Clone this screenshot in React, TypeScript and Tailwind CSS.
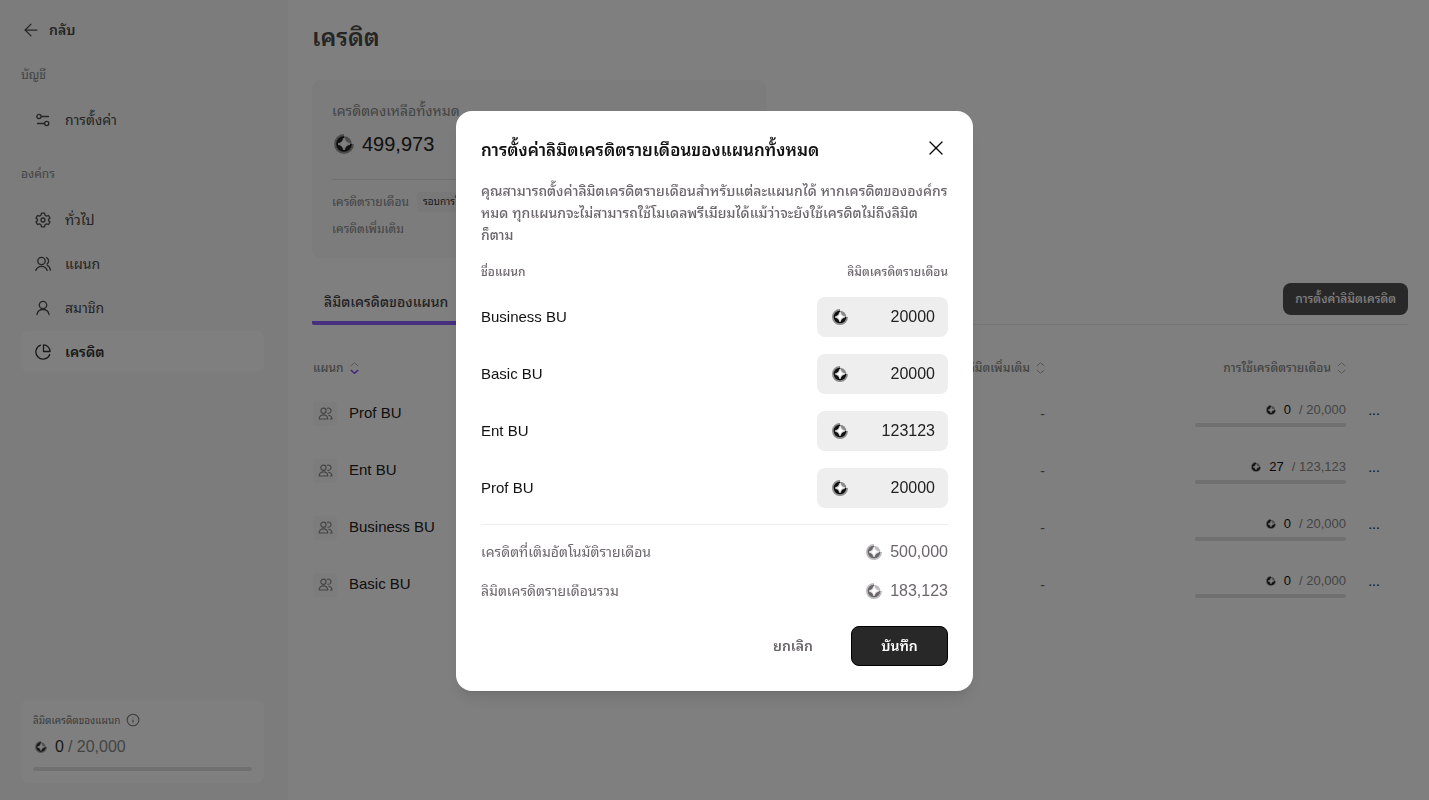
import { useState } from "react";
import { ArrowLeft, Info, X } from "lucide-react";

const departments = [
  { name: "Prof BU", used: "0", limit: "20,000" },
  { name: "Ent BU", used: "27", limit: "123,123" },
  { name: "Business BU", used: "0", limit: "20,000" },
  { name: "Basic BU", used: "0", limit: "20,000" },
];

const CoinIcon = ({ className = "" }) => (
  <svg viewBox="0 0 20 20" className={className} aria-hidden="true">
    <path d="M10 0A10 10 0 1 0 20 10H10Z" fill="currentColor" opacity="0.45" />
    <circle cx="10" cy="10" r="7.8" fill="currentColor" opacity="0.45" />
    <path d="M10 2.2A7.8 7.8 0 1 0 17.8 10H10Z" fill="currentColor" />
    <path d="M10 4Q11 9 16 10Q11 11 10 16Q9 11 4 10Q9 9 10 4Z" fill="white" stroke="white" />
  </svg>
);

const SlidersIcon = () => (
  <svg viewBox="0 0 16 16" className="size-4" fill="none" stroke="currentColor" strokeWidth="1.3" strokeLinecap="round">
    <circle cx="4" cy="4.5" r="2.1" />
    <path d="M6.5 4.5H13.5M2.5 11.5h7" />
    <circle cx="11.7" cy="11.5" r="2.1" />
  </svg>
);

const GearIcon = () => (
  <svg viewBox="0 0 16 16" className="size-4" fill="none" stroke="currentColor" strokeWidth="1.3" strokeLinejoin="round">
    <path d="M6.5 1.2h3l.5 2 1.5.9 2-.6 1.5 2.6-1.5 1.4v1l1.5 1.4-1.5 2.6-2-.6-1.5.9-.5 2h-3l-.5-2-1.5-.9-2 .6L1 9.9l1.5-1.4v-1L1 6.1l1.5-2.6 2 .6 1.5-.9z" />
    <circle cx="8" cy="8" r="2" />
  </svg>
);

const UserIcon = () => (
  <svg viewBox="0 0 16 16" className="size-4" fill="none" stroke="currentColor" strokeWidth="1.3" strokeLinecap="round">
    <circle cx="8" cy="5" r="3.7" />
    <path d="M2 14.5a6.1 6.1 0 0 1 12 0" />
  </svg>
);

const UsersIcon = () => (
  <svg viewBox="0 0 16 16" className="size-4" fill="none" stroke="currentColor" strokeWidth="1.3" strokeLinecap="round">
    <circle cx="6.5" cy="5" r="3.7" />
    <path d="M.8 14.5a6 6 0 0 1 11.4 0M11.5 1.7a3.7 3.7 0 0 1 .6 6.3M12.2 9.2a6 6 0 0 1 3.1 5" />
  </svg>
);

const GroupIcon = () => (
  <svg viewBox="0 0 16 16" className="size-[15px]" fill="none" stroke="currentColor" strokeWidth="1.2" strokeLinecap="round" strokeLinejoin="round">
    <circle cx="5.8" cy="5" r="2.8" />
    <path d="M1.2 13.8a4.6 4.4 0 0 1 9.2 0ZM10 2.4a2.8 2.8 0 1 1 .5 5.3M11.5 9.8a4.3 4.3 0 0 1 3.5 4h-2" />
  </svg>
);

const PieIcon = () => (
  <svg viewBox="0 0 16 16" className="size-4" fill="none" stroke="currentColor" strokeWidth="1.3" strokeLinejoin="round">
    <path d="M5.5 1.2A7.2 7.2 0 1 0 14.8 10.5" strokeLinecap="round" />
    <path d="M8.5 .9A6.7 6.7 0 0 1 15.1 7.5H8.5Z" />
  </svg>
);

const SortIcon = ({ active = false }) => (
  <svg viewBox="0 0 9 12" className="h-3 w-[9px]" fill="none">
    <path d="M.8 4 4.5.7 8.2 4" stroke="#aaa" />
    <path d="M.8 8l3.7 3.3L8.2 8" stroke={active ? "#7c4dff" : "#aaa"} strokeWidth={active ? 1.5 : 1} />
  </svg>
);

const NavItem = ({ icon, label, active = false }) => (
  <a
    href="#"
    className={`flex h-[41px] items-center gap-3.5 rounded-lg px-3.5 text-sm ${
      active ? "bg-white font-semibold text-[#333]" : "text-[#4a4a4a]"
    }`}
  >
    {icon}
    {label}
  </a>
);

const Sidebar = () => (
  <aside className="flex w-72 shrink-0 flex-col bg-[#f8f8f8] pb-[17px] pl-[21px] pr-6 pt-4">
    <a href="#" className="flex h-7 items-center gap-2 text-sm font-semibold text-[#4a4a4a]">
      <ArrowLeft className="size-5" strokeWidth={1.5} />
      กลับ
    </a>
    <h2 className="mt-[21px] text-xs leading-5 text-[#888]">บัญชี</h2>
    <nav className="mt-3.5">
      <NavItem icon={<SlidersIcon />} label="การตั้งค่า" />
    </nav>
    <h2 className="mt-6 text-xs leading-5 text-[#888]">องค์กร</h2>
    <nav className="mt-[15px] flex flex-col gap-[3px]">
      <NavItem icon={<GearIcon />} label="ทั่วไป" />
      <NavItem icon={<UsersIcon />} label="แผนก" />
      <NavItem icon={<UserIcon />} label="สมาชิก" />
      <NavItem icon={<PieIcon />} label="เครดิต" active />
    </nav>
    <div className="mt-auto rounded-lg bg-white px-3 pb-3 pt-2.5">
      <div className="flex h-5 items-center gap-1.5 text-[10px] text-[#777]">
        ลิมิตเครดิตของแผนก
        <Info className="size-3.5" strokeWidth={1.8} />
      </div>
      <div className="mt-[5px] flex h-6 items-center gap-1 text-base text-[#888]">
        <CoinIcon className="ml-0.5 mr-1 size-3 text-[#333]" />
        <span className="text-[#333]">0</span> / 20,000
      </div>
      <div className="mt-2 h-1 rounded-full bg-[#e0e0e0]" />
    </div>
  </aside>
);

const CreditTable = () => (
  <table className="mt-[25px] w-full text-[#222]">
    <thead>
      <tr className="h-[35px] text-xs text-[#888]">
        <th className="pl-px text-left font-medium">
          <span className="inline-flex items-center gap-1.5">
            แผนก <SortIcon active />
          </span>
        </th>
        <th className="text-right font-medium">
          <span className="inline-flex items-center gap-1.5">
            ลิมิตเพิ่มเติม <SortIcon />
          </span>
        </th>
        <th className="w-[301px] text-right font-medium">
          <span className="inline-flex items-center gap-1.5">
            การใช้เครดิตรายเดือน <SortIcon />
          </span>
        </th>
        <th className="w-[62px]" />
      </tr>
    </thead>
    <tbody>
      {departments.map((d) => (
        <tr key={d.name} className="h-[57px]">
          <td className="pl-px">
            <div className="flex items-center gap-3 text-[15px]">
              <span className="flex size-6 items-center justify-center rounded bg-[#f8f8f8] text-[#888]">
                <GroupIcon />
              </span>
              {d.name}
            </div>
          </td>
          <td className="text-right text-sm text-[#666]">-</td>
          <td>
            <div className="ml-auto w-[151px]">
              <div className="flex h-5 items-center justify-end gap-2 text-[13px] text-[#888]">
                <CoinIcon className="size-2.5 text-[#222]" />
                <span className="text-[#111]">{d.used}</span> / {d.limit}
              </div>
              <div className="mt-[3px] h-1 rounded-full bg-[#e0e0e0]" />
            </div>
          </td>
          <td>
            <button className="ml-5 block w-4 pb-2 text-center text-sm font-medium">...</button>
          </td>
        </tr>
      ))}
    </tbody>
  </table>
);

const LimitModal = () => {
  const [limits, setLimits] = useState([
    { name: "Business BU", value: "20000" },
    { name: "Basic BU", value: "20000" },
    { name: "Ent BU", value: "123123" },
    { name: "Prof BU", value: "20000" },
  ]);

  const change = (index: number, value: string) =>
    setLimits(limits.map((l, i) => (i === index ? { ...l, value } : l)));

  return (
    <div className="fixed inset-0 flex items-center justify-center bg-black/50 pt-0.5">
      <div role="dialog" aria-modal="true" className="w-full max-w-[517px] rounded-2xl bg-white p-[25px] shadow-lg">
        <div className="flex h-7 items-start justify-between">
          <h2 className="text-[17px] font-semibold leading-[30px] text-[#111]">การตั้งค่าลิมิตเครดิตรายเดือนของแผนกทั้งหมด</h2>
          <button aria-label="ปิด">
            <X className="size-6" strokeWidth={1.3} />
          </button>
        </div>
        <p className="mt-4 text-sm font-medium leading-[22px] text-[#6b666b]">
          คุณสามารถตั้งค่าลิมิตเครดิตรายเดือนสำหรับแต่ละแผนกได้ หากเครดิตขององค์กร
          <br />
          หมด ทุกแผนกจะไม่สามารถใช้โมเดลพรีเมียมได้แม้ว่าจะยังใช้เครดิตไม่ถึงลิมิต
          <br />
          ก็ตาม
        </p>
        <div className="mt-4 flex justify-between text-xs font-medium leading-5 text-[#6b666b]">
          <span>ชื่อแผนก</span>
          <span>ลิมิตเครดิตรายเดือน</span>
        </div>
        <div className="mt-[15px] flex flex-col gap-[17px]">
          {limits.map((l, i) => (
            <label key={l.name} className="flex h-10 items-center justify-between text-[15px] text-[#111]">
              {l.name}
              <span className="flex h-10 w-[131px] items-center rounded-lg bg-[#eee] px-[13px]">
                <CoinIcon className="ml-0.5 size-4 shrink-0" />
                <input
                  value={l.value}
                  onChange={(e) => change(i, e.target.value)}
                  className="w-full min-w-0 bg-transparent text-right text-base text-[#222] outline-none"
                />
              </span>
            </label>
          ))}
        </div>
        <div className="mt-4 flex flex-col gap-[15px] border-t border-[#eee] pt-[15px] text-sm text-[#6b666b]">
          <div className="flex h-6 items-center justify-between">
            เครดิตที่เติมอัตโนมัติรายเดือน
            <span className="flex items-center gap-2 text-base">
              <CoinIcon className="size-4" /> 500,000
            </span>
          </div>
          <div className="flex h-6 items-center justify-between">
            ลิมิตเครดิตรายเดือนรวม
            <span className="flex items-center gap-2 text-base">
              <CoinIcon className="size-4" /> 183,123
            </span>
          </div>
        </div>
        <div className="mt-[23px] flex justify-end gap-2.5 text-sm font-semibold">
          <button className="h-10 px-7 text-[#6b666b]">ยกเลิก</button>
          <button className="h-10 w-[97px] rounded-lg border border-black bg-[#282828] text-white">บันทึก</button>
        </div>
      </div>
    </div>
  );
};

export default function App() {
  return (
    <div className="flex min-h-screen bg-white font-['Liberation_Sans','Noto_Sans_Thai_Looped','Noto_Looped_Thai','Loma','Garuda','Noto_Sans_Thai',sans-serif]">
      <Sidebar />
      <main className="flex-1 pl-6 pr-[21px] pt-5">
        <h1 className="text-2xl font-semibold leading-9 text-[#4a4a4a]">เครดิต</h1>
        <section className="mt-6 h-[178px] max-w-[454px] rounded-lg bg-[#f8f8f8] px-5 pt-[21px]">
          <h2 className="text-sm leading-5 text-[#888]">เครดิตคงเหลือทั้งหมด</h2>
          <div className="mt-[9px] flex h-7 items-center gap-2 text-xl text-[#222]">
            <CoinIcon className="ml-0.5 size-5" />
            499,973
          </div>
          <div className="mt-[21px] flex items-center gap-2 border-t border-[#e0e0e0] pt-3 text-xs text-[#888]">
            เครดิตรายเดือน
            <span className="rounded bg-[#f0f0f0] px-1.5 text-[10px] leading-5 text-[#333]">รอบการใช้งาน</span>
          </div>
          <div className="mt-[7px] text-xs leading-5 text-[#888]">เครดิตเพิ่มเติม</div>
        </section>
        <div className="mt-5 flex items-start justify-between border-b border-[#eee]">
          <button className="-mb-px h-[47px] rounded-b-xs border-b-4 border-[#8b62ff] px-3 pt-1 text-sm font-medium text-[#444]">
            ลิมิตเครดิตของแผนก
          </button>
          <button className="mt-[5px] h-8 rounded-lg bg-[#505050] px-3 text-xs font-medium text-white">การตั้งค่าลิมิตเครดิต</button>
        </div>
        <CreditTable />
      </main>
      <LimitModal />
    </div>
  );
}
